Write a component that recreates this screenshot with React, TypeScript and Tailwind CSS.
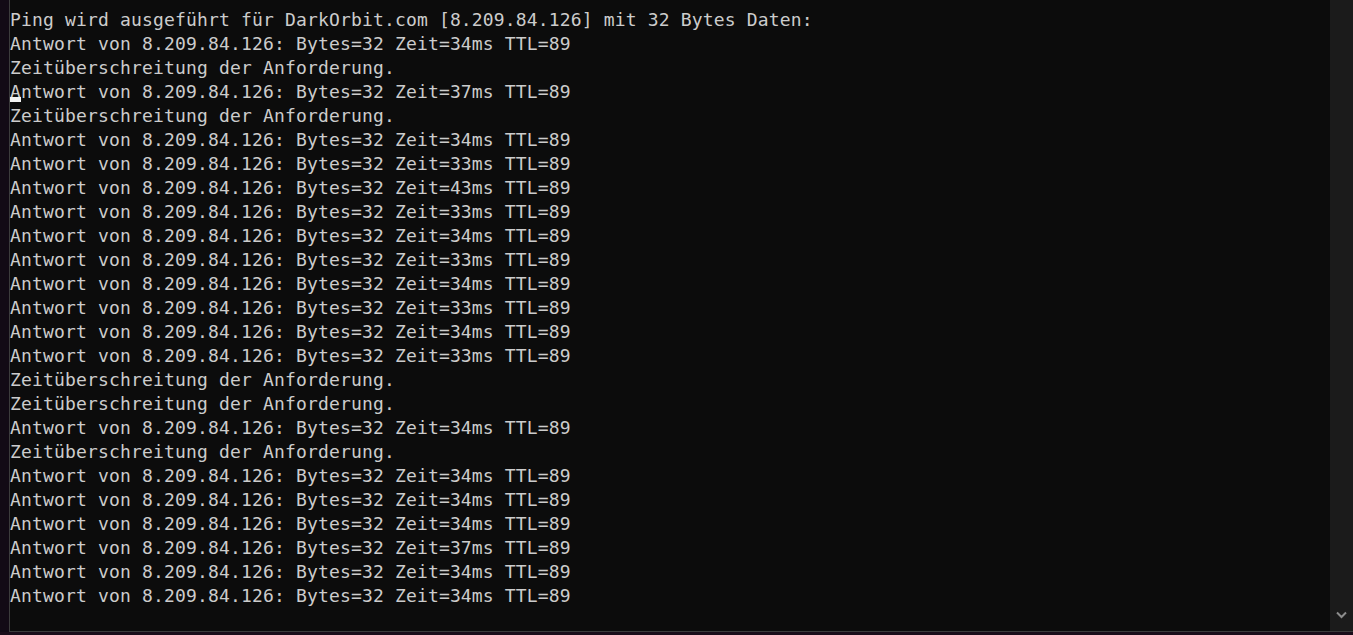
import React from "react";

const lines: string[] = [
  "Ping wird ausgeführt für DarkOrbit.com [8.209.84.126] mit 32 Bytes Daten:",
  "Antwort von 8.209.84.126: Bytes=32 Zeit=34ms TTL=89",
  "Zeitüberschreitung der Anforderung.",
  "Antwort von 8.209.84.126: Bytes=32 Zeit=37ms TTL=89",
  "Zeitüberschreitung der Anforderung.",
  "Antwort von 8.209.84.126: Bytes=32 Zeit=34ms TTL=89",
  "Antwort von 8.209.84.126: Bytes=32 Zeit=33ms TTL=89",
  "Antwort von 8.209.84.126: Bytes=32 Zeit=43ms TTL=89",
  "Antwort von 8.209.84.126: Bytes=32 Zeit=33ms TTL=89",
  "Antwort von 8.209.84.126: Bytes=32 Zeit=34ms TTL=89",
  "Antwort von 8.209.84.126: Bytes=32 Zeit=33ms TTL=89",
  "Antwort von 8.209.84.126: Bytes=32 Zeit=34ms TTL=89",
  "Antwort von 8.209.84.126: Bytes=32 Zeit=33ms TTL=89",
  "Antwort von 8.209.84.126: Bytes=32 Zeit=34ms TTL=89",
  "Antwort von 8.209.84.126: Bytes=32 Zeit=33ms TTL=89",
  "Zeitüberschreitung der Anforderung.",
  "Zeitüberschreitung der Anforderung.",
  "Antwort von 8.209.84.126: Bytes=32 Zeit=34ms TTL=89",
  "Zeitüberschreitung der Anforderung.",
  "Antwort von 8.209.84.126: Bytes=32 Zeit=34ms TTL=89",
  "Antwort von 8.209.84.126: Bytes=32 Zeit=34ms TTL=89",
  "Antwort von 8.209.84.126: Bytes=32 Zeit=34ms TTL=89",
  "Antwort von 8.209.84.126: Bytes=32 Zeit=37ms TTL=89",
  "Antwort von 8.209.84.126: Bytes=32 Zeit=34ms TTL=89",
  "Antwort von 8.209.84.126: Bytes=32 Zeit=34ms TTL=89",
];

export default function App() {
  return (
    <div className="w-[1353px] h-[635px] flex flex-col bg-[#130b16] overflow-hidden">
      <div className="flex flex-1 min-h-0">
        <div className="w-[9px] bg-[#120a15]" />
        <div className="flex flex-1 border-l border-b border-[#3c3c3c] bg-[#0c0c0c]">
          <div
            className="flex-1 pt-[8px] pl-[0px] text-[#cccccc] text-[18px] leading-[24px] tracking-[0.16px] whitespace-pre"
            style={{ fontFamily: '"DejaVu Sans Mono", "Liberation Mono", monospace' }}
          >
            {lines.map((l, i) => (
              <div key={i} className="relative h-[24px]">
                {l}
                {i === 3 && (
                  <span className="absolute left-0 top-[17px] w-[11px] h-[5px] bg-[#f2f2f2]" />
                )}
              </div>
            ))}
          </div>
          <div className="w-[23px] bg-[#1b1b1b] flex flex-col justify-end items-center pb-[12px]">
            <svg width="11" height="8" viewBox="0 0 11 8">
              <path d="M1 1.5 L5.5 6 L10 1.5" stroke="#8c8c8c" strokeWidth="2" fill="none" />
            </svg>
          </div>
        </div>
      </div>
      <div className="h-[3px] bg-[#1a0d1a]" />
    </div>
  );
}
